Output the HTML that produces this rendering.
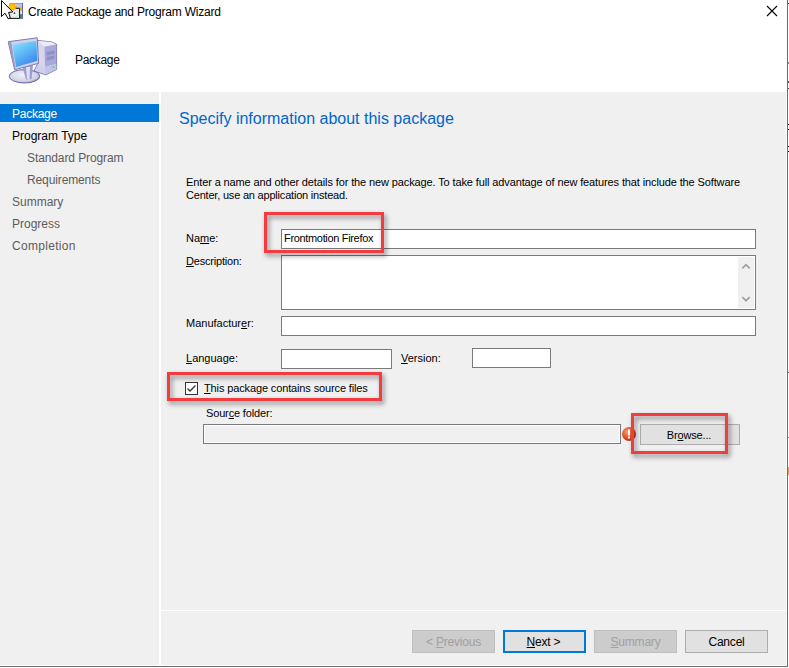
<!DOCTYPE html>
<html><head><meta charset="utf-8"><style>
*{box-sizing:border-box;margin:0;padding:0}
html,body{width:789px;height:668px;overflow:hidden;background:#fff;font-family:"Liberation Sans",sans-serif;color:#000}
.a{position:absolute}
.t12{font-size:12px;line-height:12px;white-space:nowrap}
.t11{font-size:11px;line-height:11px;white-space:nowrap}
.nav{color:#5c5c5c}
.fld{position:absolute;background:#fff;border:1px solid #7a7a7a}
.btn{position:absolute;height:23px;width:83px;background:#e1e1e1;border:1px solid #adadad;font-size:11px;text-align:center}
.btn span{position:absolute;left:0;right:0;top:4.5px;line-height:12px;font-size:12px;letter-spacing:-0.2px}
.dis{background:#cccccc;border-color:#bfbfbf;color:#a0a0a0}
u{text-decoration:underline;text-decoration-thickness:1px;text-underline-offset:0.5px}
.rb{position:absolute;border:3px solid #f43b3f;filter:drop-shadow(2px 3px 2.5px rgba(0,0,0,0.45))}
</style></head><body>
<!-- title bar + header white -->
<div class="a" style="left:0;top:0;width:789px;height:92px;background:#fff"></div>
<div class="a t12" style="left:28px;top:6px;color:#000;letter-spacing:-0.2px">Create Package and Program Wizard</div>
<!-- close X -->
<svg class="a" style="left:766px;top:5px" width="12" height="12" viewBox="0 0 12 12"><path d="M1 1L11 11M11 1L1 11" stroke="#000" stroke-width="1.1"/></svg>
<!-- title icon + cursor -->
<svg class="a" style="left:0;top:0" width="28" height="24" viewBox="0 0 28 24">
<defs><radialGradient id="sun" cx="0.5" cy="0.5" r="0.5"><stop offset="0" stop-color="#ffd000"/><stop offset="1" stop-color="#f8a018"/></radialGradient>
<radialGradient id="cd" cx="0.5" cy="0.5" r="0.5"><stop offset="0" stop-color="#444"/><stop offset="0.18" stop-color="#555"/><stop offset="0.22" stop-color="#f4f4f4"/><stop offset="0.6" stop-color="#e8eef8"/><stop offset="0.85" stop-color="#d0e8d8"/><stop offset="1" stop-color="#e8e0f0"/></radialGradient></defs>
<rect x="9.5" y="3" width="13.5" height="15.8" fill="#9494d4"/>
<rect x="22" y="3" width="1" height="15.8" fill="#6464b0"/>
<rect x="10.5" y="4" width="11.5" height="4" fill="#bcc4f0"/>
<path d="M15 6.8H21.8V10.8H20V8.2H15Z" fill="#f8c000"/>
<rect x="20" y="10.8" width="2" height="3.6" fill="#e4ecf4"/>
<rect x="20" y="14.4" width="2" height="4.2" fill="#3c9048"/>
<rect x="9" y="8.5" width="10.5" height="10" fill="#fafafa"/>
<circle cx="14.5" cy="13.3" r="5" fill="url(#cd)"/>
<path d="M15 8.3H19.6V18.4H9" fill="none" stroke="#111" stroke-width="1"/>
<path d="M12.40 2.40L13.39 4.27L15.36 3.48L14.91 5.55L16.93 6.20L15.26 7.50L16.38 9.30L14.26 9.22L13.97 11.32L12.40 9.90L10.83 11.32L10.54 9.22L8.42 9.30L9.54 7.50L7.87 6.20L9.89 5.55L9.44 3.48L11.41 4.27Z" fill="url(#sun)"/>
<path d="M1.5 0.5L1.5 16.5L5 13.2L8.2 18.8L10.3 17.9L8.6 12.4L12.8 12Z" fill="#fff" stroke="#000" stroke-width="1" stroke-linejoin="miter"/>
</svg>
<!-- computer icon -->
<svg class="a" style="left:0;top:30px" width="62" height="60" viewBox="0 30 62 60">
<defs>
<linearGradient id="scr" x1="0" y1="0" x2="0.6" y2="1"><stop offset="0" stop-color="#9ae4fc"/><stop offset="0.45" stop-color="#62c0f6"/><stop offset="1" stop-color="#3c88ee"/></linearGradient>
<linearGradient id="twr" x1="0" y1="0" x2="1" y2="0"><stop offset="0" stop-color="#d8d8ea"/><stop offset="1" stop-color="#b0b0d8"/></linearGradient>
<radialGradient id="base" cx="0.45" cy="0.4" r="0.6"><stop offset="0" stop-color="#f4f4fa"/><stop offset="0.8" stop-color="#d0d0e4"/><stop offset="1" stop-color="#9090c0"/></radialGradient>
</defs>
<!-- tower -->
<path d="M37.5 40.5L51 41.8L56.6 44.2L56.6 69.5L45.8 74.8L34 71L37.5 64Z" fill="#d6d6ec" stroke="#6e6eaa" stroke-width="0.9" stroke-linejoin="round"/>
<path d="M38 41L51 42L56 44.2L44.5 46.8Z" fill="#ececf8"/>
<path d="M44.5 46.8L56.2 44.4L56.2 64L45 67Z" fill="#a8a8dc"/>
<path d="M46.5 52L54.5 50.5L54.5 54L46.5 55.5Z" fill="#9090c8"/>
<path d="M46.5 57L54.5 55.5L54.5 59L46.5 60.5Z" fill="#9090c8"/>
<path d="M35 70.5L38 64.5L45 67L56.2 64L56.2 69.3L45.8 74.2Z" fill="#d0d0ea"/>
<path d="M45 67L56.2 64L56.2 69.3L45.8 74.2Z" fill="#c2c2e4"/>
<circle cx="53.4" cy="67" r="1.1" fill="#50e050"/>
<!-- base -->
<ellipse cx="24.5" cy="76.3" rx="15.3" ry="6.7" fill="url(#base)" stroke="#6a6aae" stroke-width="1"/>
<!-- neck -->
<path d="M22.5 67L33 65L31.5 79L26 79.5Z" fill="#9c9cd4"/>
<path d="M26 67L30 66.5L29.5 79L27 79.2Z" fill="#e0e0f4"/>
<!-- monitor bezel -->
<path d="M8.2 41.7L37.2 37.8L38.6 63.3L14.6 69.8Z" fill="#d0d0e8" stroke="#7c7cb0" stroke-width="1"/>
<path d="M8.2 41.7L11 41.4L15.8 69.4L14.6 69.8Z" fill="#9a9ac4"/>
<path d="M12.3 44.6L36.3 41.1L37.4 60.8L16.2 67Z" fill="url(#scr)"/>
</svg>
<div class="a t12" style="left:75px;top:54px;color:#000;letter-spacing:-0.3px">Package</div>

<!-- nav panel -->
<div class="a" style="left:0;top:92px;width:159px;height:574px;background:#f0f0f0"></div>
<div class="a" style="left:0;top:104px;width:159px;height:18px;background:#0078d7"></div>
<div class="a t12" style="left:12px;top:108px;color:#fff;letter-spacing:-0.25px">Package</div>
<div class="a t12" style="left:12px;top:130px;color:#000">Program Type</div>
<div class="a t12 nav" style="left:27px;top:152px;letter-spacing:-0.1px">Standard Program</div>
<div class="a t12 nav" style="left:27px;top:174px;letter-spacing:-0.12px">Requirements</div>
<div class="a t12 nav" style="left:12px;top:196px">Summary</div>
<div class="a t12 nav" style="left:12px;top:218px">Progress</div>
<div class="a t12 nav" style="left:12px;top:240px;letter-spacing:0.3px">Completion</div>
<div class="a" style="left:159px;top:92px;width:2px;height:574px;background:#fff"></div>

<!-- content -->
<div class="a" style="left:161px;top:92px;width:625px;height:518px;background:#f0f0f0"></div>
<div class="a" style="left:161px;top:610px;width:625px;height:1px;background:#fff"></div>
<div class="a" style="left:161px;top:611px;width:625px;height:54px;background:#f0f0f0"></div>
<!-- window borders -->
<div class="a" style="left:0;top:665px;width:787px;height:1px;background:#fff"></div>
<div class="a" style="left:0;top:666px;width:788px;height:1px;background:#6b6b6b"></div>
<div class="a" style="left:786px;top:92px;width:1px;height:574px;background:#fff"></div>
<div class="a" style="left:787px;top:0;width:1px;height:667px;background:#6b6b6b"></div>
<div class="a" style="left:788px;top:3px;width:1px;height:1px;background:#333"></div>
<div class="a" style="left:788px;top:62px;width:1px;height:2px;background:#888"></div>
<div class="a" style="left:788px;top:81px;width:1px;height:2px;background:#555"></div>
<div class="a" style="left:788px;top:88px;width:1px;height:1px;background:#555"></div>
<div class="a" style="left:788px;top:124px;width:1px;height:1px;background:#111"></div>
<div class="a" style="left:788px;top:129px;width:1px;height:1px;background:#111"></div>
<div class="a" style="left:788px;top:146px;width:1px;height:1px;background:#111"></div>
<div class="a" style="left:788px;top:151px;width:1px;height:1px;background:#111"></div>
<div class="a" style="left:788px;top:372px;width:1px;height:1px;background:#555"></div>
<div class="a" style="left:788px;top:437px;width:1px;height:1px;background:#4a90d0"></div>
<div class="a" style="left:788px;top:467px;width:1px;height:8px;background:#e8a050"></div>

<div class="a" style="left:179px;top:111px;font-size:16px;line-height:16px;color:#0066cc;white-space:nowrap">Specify information about this package</div>

<div class="a t11" style="left:186px;top:176px;line-height:13px;letter-spacing:-0.12px">Enter a name and other details for the new package. To take full advantage of new features that include the Software</div>
<div class="a t11" style="left:186px;top:189px;line-height:13px;letter-spacing:-0.2px">Center, use an application instead.</div>

<div class="a t11" style="left:186px;top:233px">Na<u>m</u>e:</div>
<div class="fld" style="left:281px;top:229px;width:475px;height:20px"></div>
<div class="a t11" style="left:284px;top:233px;letter-spacing:-0.33px">Frontmotion Firefox</div>

<div class="a t11" style="left:186px;top:256px;letter-spacing:-0.2px"><u>D</u>escription:</div>
<div class="fld" style="left:281px;top:255px;width:475px;height:55px"></div>
<div class="a" style="left:738px;top:257px;width:16px;height:51px;background:#f0f0f0"></div>
<svg class="a" style="left:738px;top:257px" width="16" height="51" viewBox="0 0 16 51"><path d="M4.3 11.3L8 7.6L11.7 11.3M4.3 40L8 43.7L11.7 40" fill="none" stroke="#a0a0a0" stroke-width="1.7"/></svg>

<div class="a t11" style="left:186px;top:318px">Manufactur<u>e</u>r:</div>
<div class="fld" style="left:281px;top:316px;width:475px;height:20px"></div>

<div class="a t11" style="left:186px;top:353px"><u>L</u>anguage:</div>
<div class="fld" style="left:281px;top:349px;width:111px;height:20px"></div>
<div class="a t11" style="left:401px;top:353px"><u>V</u>ersion:</div>
<div class="fld" style="left:472px;top:348px;width:79px;height:20px"></div>

<!-- checkbox -->
<div class="a" style="left:185px;top:382px;width:13px;height:13px;background:#fff;border:1px solid #333"></div>
<svg class="a" style="left:185px;top:382px" width="13" height="13" viewBox="0 0 13 13"><path d="M2.5 6.5L5 9L10.5 3.5" fill="none" stroke="#333" stroke-width="1.3"/></svg>
<div class="a t11" style="left:204px;top:383px;letter-spacing:-0.13px"><u>T</u>his package contains source files</div>

<div class="a t11" style="left:206px;top:408px;letter-spacing:-0.15px">Sour<u>c</u>e folder:</div>
<div class="a" style="left:203px;top:424px;width:418px;height:20px;background:#f0f0f0;border:1px solid #7a7a7a;box-shadow:inset 0 0 0 1px #fff"></div>
<!-- error icon -->
<svg class="a" style="left:621px;top:426px" width="16" height="16" viewBox="0 0 16 16"><defs><radialGradient id="eg" cx="0.4" cy="0.35" r="0.7"><stop offset="0" stop-color="#f7a070"/><stop offset="0.6" stop-color="#e0532a"/><stop offset="1" stop-color="#a83010"/></radialGradient></defs><circle cx="8" cy="8" r="7" fill="url(#eg)"/><rect x="7" y="3.5" width="2" height="6" fill="#fff"/><rect x="7" y="10.5" width="2" height="2" fill="#fff"/></svg>
<div class="a" style="left:640px;top:424px;width:100px;height:21px;background:#e1e1e1;border:1px solid #adadad"></div>
<div class="a t11" style="left:639px;top:430px;width:100px;text-align:center;letter-spacing:-0.15px">Br<u>o</u>wse...</div>

<!-- buttons -->
<div class="btn dis" style="left:412px;top:630px"><span>&lt; <u>P</u>revious</span></div>
<div class="btn" style="left:503px;top:630px;border:2px solid #0078d7"><span style="top:3.5px;left:-2px"><u>N</u>ext &gt;</span></div>
<div class="btn dis" style="left:594px;top:630px"><span><u>S</u>ummary</span></div>
<div class="btn" style="left:685px;top:630px"><span>Cancel</span></div>

<!-- red highlight boxes -->
<div class="rb" style="left:264px;top:212px;width:120px;height:41px"></div>
<div class="rb" style="left:167px;top:372px;width:215px;height:29px"></div>
<div class="rb" style="left:631px;top:413px;width:97px;height:41px"></div>
</body></html>
